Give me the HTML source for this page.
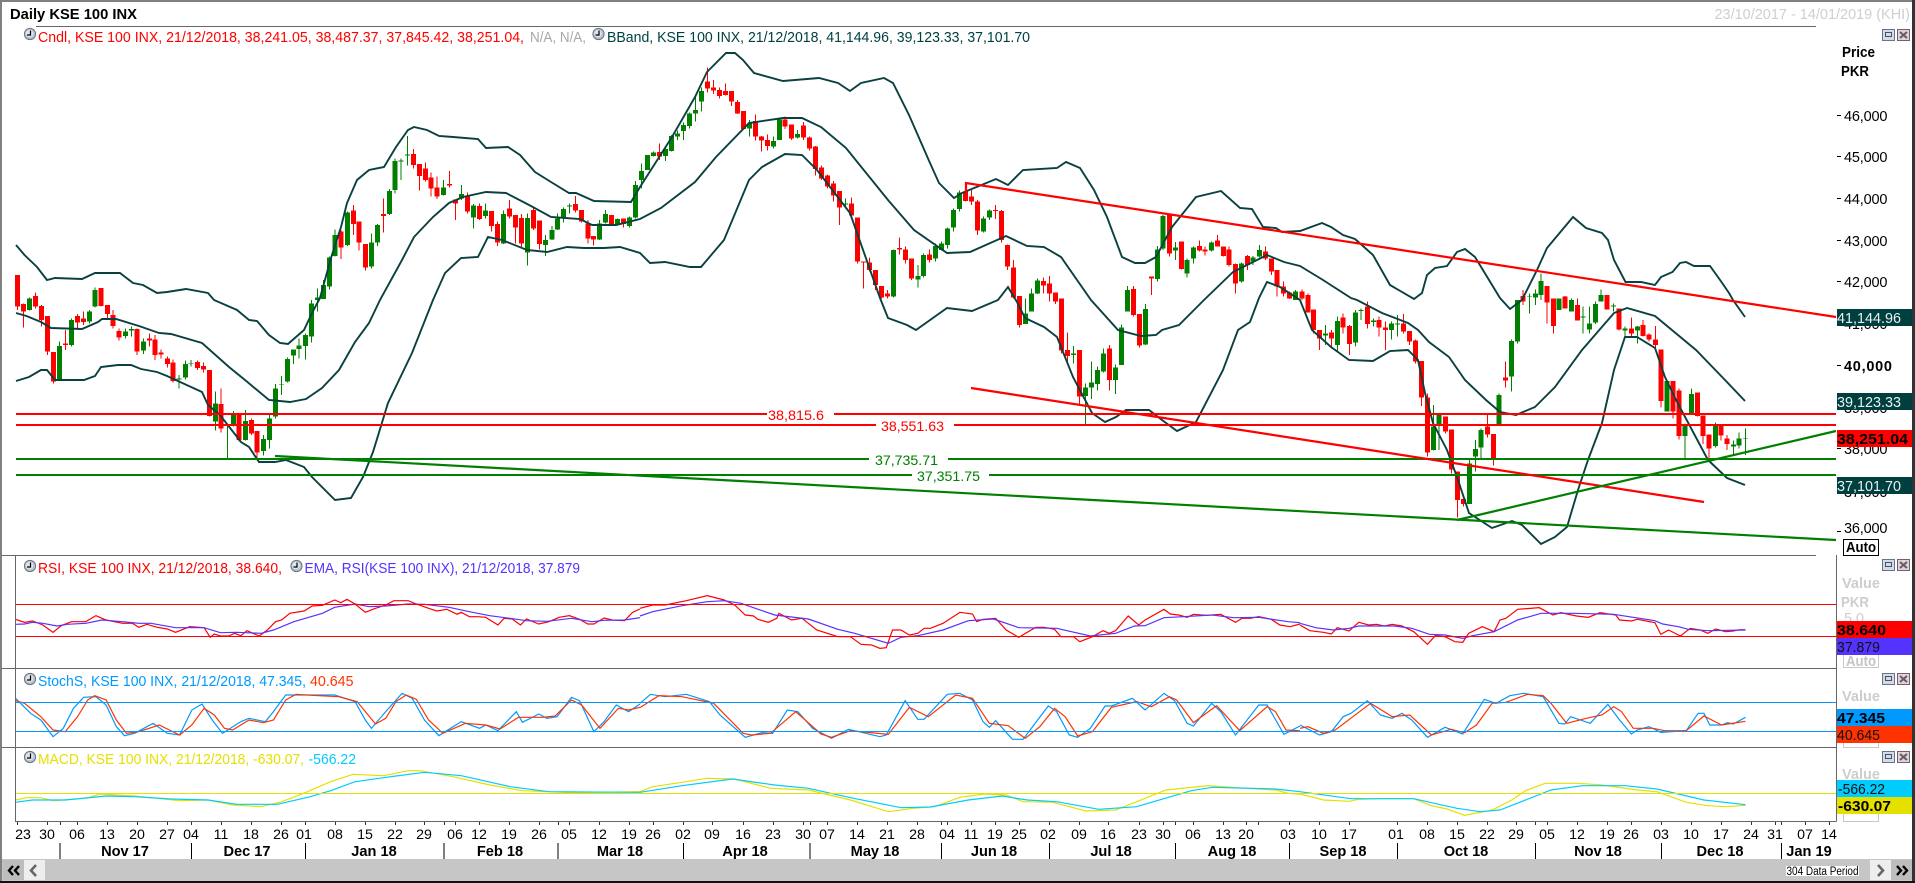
<!DOCTYPE html>
<html><head><meta charset="utf-8"><title>Daily KSE 100 INX</title>
<style>
html,body{margin:0;padding:0;background:#fff;overflow:hidden}
svg{display:block;font-family:"Liberation Sans",Arial,sans-serif;font-size:14px}
path,polyline{vector-effect:non-scaling-stroke;fill:none}
.gb{stroke:#007f00;stroke-width:5;shape-rendering:crispEdges}
.gw{stroke:#007f00;stroke-width:1;shape-rendering:crispEdges}
.rb{stroke:#f00;stroke-width:5;shape-rendering:crispEdges}
.rw{stroke:#f00;stroke-width:1;shape-rendering:crispEdges}
.band{fill:none;stroke:#0a4040;stroke-width:1.9}
.t{fill:none;stroke-width:1.2}
.d{text-anchor:middle}
.m{text-anchor:middle;font-weight:bold;font-size:14.6px}
</style></head><body>
<svg width="1915" height="883" viewBox="0 0 1915 883" xmlns="http://www.w3.org/2000/svg">
<rect width="1915" height="883" fill="#fff"/>

<!-- candles left -->
<g transform="scale(.40816,.33333)">
<path class="rw" d="M43 825V930M57 910V982M87 877V925M102 915V980M116 948V1065M131 1056V1150M160 990V1050M190 942V985M204 935V975M248 864V920M263 915V955M277 930V985M292 985V1022M336 985V1065M366 1000V1040M380 1005V1080M395 1048V1075M410 1070V1102M424 1078V1148M484 1082V1110M498 1087V1118M513 1110V1250M542 1165V1298M586 1240V1325M616 1255V1305M630 1293V1372M836 690V777M866 615V705M880 665V752M895 732V812M939 595V698M1013 447V505M1028 492V572M1042 487V545M1056 517V590M1071 530V597M1101 513V563M1116 598V660M1145 577V640M1175 610V660M1204 633V695M1219 665V738M1248 600V655M1263 645V730M1278 642V745M1307 622V690M1322 662V748M1410 588V637M1425 630V668M1440 660V730M1454 708V737M1498 645V672M1528 655V683"/>
<path class="rb" d="M43 825V920M57 912V935M87 888V920M102 918V960M116 948V1055M131 1056V1145M160 1030V1035M190 948V968M204 955V966M248 864V918M263 915V942M277 945V978M292 993V1013M336 987V1055M366 1015V1022M380 1018V1065M395 1058V1063M410 1075V1092M424 1087V1143M484 1086V1104M498 1098V1108M513 1110V1248M542 1212V1285M586 1240V1320M616 1260V1300M630 1293V1358M836 695V743M866 632V672M880 665V728M895 732V803M939 642V648M1013 462V495M1028 492V528M1042 505V540M1056 532V565M1071 562V590M1101 552V557M1116 598V610M1145 586V635M1175 618V657M1204 633V678M1219 672V728M1248 625V650M1263 645V683M1278 654V730M1307 630V685M1322 662V732M1410 612V632M1425 630V665M1440 670V715M1454 708V718M1498 645V672M1528 655V672"/>
<path class="gw" d="M72 893V932M146 1025V1045M175 955V1040M219 930V970M233 862V922M307 985V1015M322 980V1010M351 1015V1062M439 1125V1165M454 1082V1138M468 1080V1100M528 1175V1292M557 1275V1375M572 1233V1280M601 1230V1322M645 1305V1367M660 1245V1345M675 1152V1255M690 1128V1185M704 1073V1148M719 1048V1092M733 1015V1075M748 1000V1078M763 900V1028M778 865V935M792 840V897M807 770V868M821 688V770M851 635V738M910 700V805M925 672V738M954 567V645M968 475V580M983 475V540M998 408V497M1086 540V587M1131 555V600M1160 612V686M1190 610V655M1234 632V732M1292 640V797M1337 705V768M1352 678V720M1366 640V690M1381 622V667M1395 610V640M1469 660V720M1484 630V670M1513 655V675M1542 650V683M1557 543V655"/>
<path class="gb" d="M72 895V930M146 1038V1138M175 960V1035M219 935V965M233 870V920M307 995V1008M322 987V991M351 1025V1052M439 1135V1138M454 1092V1133M468 1089V1091M528 1210V1265M557 1275V1278M572 1245V1278M601 1263V1320M645 1317V1353M660 1255V1320M675 1165V1250M690 1152V1154M704 1077V1145M719 1048V1067M733 1036V1047M748 1005V1038M763 910V1010M778 893V900M792 855V897M807 773V860M821 705V768M851 638V735M910 727V800M925 675V728M954 573V642M968 483V570M983 481V485M998 463V467M1086 562V585M1131 582V595M1160 617V653M1190 632V648M1234 642V730M1292 654V758M1337 720V735M1352 690V718M1366 655V688M1381 627V652M1395 617V620M1469 670V718M1484 642V668M1513 657V672M1542 653V678M1557 555V653"/>
</g>
<!-- candles middle -->
<g transform="translate(640,0) scale(.42088,.33333)">
<path class="rw" d="M46 430V480M160 203V278M175 240V282M189 262V295M203 250V287M217 273V318M232 300V342M246 333V388M274 343V422M289 408V455M303 403V452M345 350V387M360 373V420M388 366V420M403 410V452M417 438V527M431 497V540M445 523V565M460 543V605M474 573V675M502 592V650M517 652V790M531 785V865M545 772V815M560 810V870M574 858V895M588 870V895M617 712V763M631 740V790M645 775V840M688 748V788M773 548V605M788 565V615M802 600V705M845 615V657M859 630V728M873 733V810M887 780V895M902 888V983M959 832V880M973 828V905M987 877V912M1001 895V1060M1016 998V1085M1044 1050V1215M1115 1035V1172M1172 858V950M1187 942V1043M1215 830V885M1258 645V770M1286 725V808M1329 722V755M1343 740V767M1372 705V740M1386 740V770M1400 740V800M1415 790V880M1443 765V810M1486 740V780M1500 775V825M1514 810V890M1529 845V890M1543 875V897"/>
<path class="rb" d="M46 456V470M160 245V265M175 262V272M189 270V288M203 273V285M217 273V305M232 306V340M246 333V387M274 363V410M289 410V422M303 420V438M345 358V380M360 373V415M388 376V413M403 412V445M417 440V507M431 502V535M445 526V560M460 550V587M474 573V622M502 610V647M517 652V785M531 785V787M545 787V810M560 810V855M574 858V892M588 880V890M617 744V748M631 748V780M645 775V835M688 763V780M773 575V603M788 590V605M802 605V692M845 630V633M859 633V720M873 735V800M887 802V892M902 888V975M959 843V857M973 850V880M987 877V905M1001 895V1052M1016 1050V1068M1044 1050V1190M1115 1045V1140M1172 867V945M1187 942V1037M1215 830V835M1258 645V760M1286 725V807M1329 738V752M1343 748V755M1372 722V740M1386 740V768M1400 748V795M1415 792V850M1443 768V795M1486 755V775M1500 775V815M1514 810V860M1529 860V880M1543 877V895"/>
<path class="gw" d="M4 490V565M18 465V510M32 455V470M60 440V483M75 405V455M89 392V420M103 368V420M118 338V385M132 285V365M146 262V335M260 360V410M317 410V445M331 352V420M374 390V415M488 595V625M602 748V892M660 795V862M674 760V832M702 730V785M716 725V752M731 682V745M745 625V695M759 572V635M816 650V697M830 628V660M916 895V972M930 865V935M945 835V882M1030 1038V1090M1059 1150V1272M1073 1085V1197M1087 1100V1172M1101 1045V1117M1130 1093V1182M1144 973V1095M1158 858V935M1201 912V1035M1229 738V845M1243 645V750M1272 726V780M1300 775V832M1315 740V790M1358 725V755M1429 788V848M1457 768V795M1472 735V773M1557 870V900"/>
<path class="gb" d="M4 513V540M18 465V510M32 458V468M60 447V468M75 408V453M89 400V410M103 375V393M118 340V378M132 330V340M146 273V305M260 370V385M317 423V440M331 358V420M374 402V413M488 610V613M602 750V890M660 828V838M674 765V828M702 738V775M716 730V750M731 685V735M745 630V683M759 577V627M816 655V695M830 632V653M916 940V972M930 880V935M945 842V880M1030 1060V1065M1059 1162V1188M1073 1147V1163M1087 1110V1152M1101 1060V1115M1130 1102V1140M1144 982V1095M1158 870V935M1201 927V1033M1229 748V837M1243 648V745M1272 743V752M1300 780V820M1315 743V775M1358 728V752M1429 790V845M1457 772V785M1472 750V770M1557 875V900"/>
</g>
<!-- candles right -->
<g transform="translate(1300,0) scale(.39216,.33333)">
<path class="rw" d="M5 868V900M20 880V938M35 928V1000M50 990V1050M80 990V1045M110 940V1000M126 975V1065M172 905V985M202 950V1010M218 965V1050M264 942V1000M279 993V1035M294 1018V1090M310 1083V1218M325 1180V1370M371 1250V1300M386 1288V1420M401 1415V1552M417 1495V1520M478 1240V1313M493 1302V1397M524 1085V1162M569 870V915M630 858V970M646 895V1000M676 888V925M707 895V962M783 885V928M814 925V992M845 952V1010M875 960V1010M890 1000V1025M906 978V1048M921 1048V1222M951 1143V1255M967 1165V1318M1013 1177V1250M1028 1247V1332M1043 1303V1375M1074 1275V1322M1089 1305V1350"/>
<path class="rb" d="M5 875V895M20 885V938M35 928V990M50 990V1015M80 997V1015M110 952V982M126 978V1032M172 920V972M202 960V983M218 982V990M264 970V995M279 993V1025M294 1022V1085M310 1083V1193M325 1193V1358M371 1250V1295M386 1288V1408M401 1415V1500M417 1497V1512M478 1280V1303M493 1302V1375M524 1132V1142M569 888V905M630 858V908M646 895V978M676 890V925M707 915V962M783 885V928M814 925V988M845 985V1000M875 975V1008M890 1003V1018M906 1018V1035M921 1048V1203M951 1143V1235M967 1172V1308M1013 1177V1248M1028 1247V1308M1043 1303V1345M1074 1275V1307M1089 1315V1332"/>
<path class="gw" d="M65 975V1035M95 950V1055M141 930V1040M156 925V960M187 955V980M233 965V1018M248 945V1010M340 1215V1352M355 1240V1350M432 1380V1512M447 1320V1415M462 1285V1375M508 1180V1272M539 1018V1175M554 900V1030M585 880V940M600 868V915M615 820V900M661 895V930M692 895V935M722 920V1000M738 920V1000M753 905V972M768 868V905M799 910V935M829 980V1010M860 978V1030M936 1140V1235M982 1270V1375M998 1165V1242M1059 1268V1342M1105 1322V1362M1120 1297V1345M1136 1285V1365"/>
<path class="gb" d="M65 1000V1007M95 963V1035M141 938V1028M156 930V933M187 962V966M233 970V990M248 970V973M340 1280V1350M355 1245V1275M432 1390V1512M447 1347V1370M462 1290V1343M508 1185V1272M539 1023V1130M554 900V1025M585 889V891M600 880V893M615 843V885M661 895V930M692 900V935M722 950V953M738 970V988M753 912V968M768 885V905M799 917V920M829 985V992M860 980V992M936 1143V1235M982 1278V1308M998 1182V1240M1059 1272V1338M1105 1334V1340M1120 1315V1337M1136 1314V1316"/>
</g>

<!-- Bollinger bands -->
<polyline class="band" points="16,245 24.5,255 37,267 47,280 55,278 82,279 95,273 120,273 133,283 143,285 157,293 167,292 186,289 208,293 214,300 237,310 249,320 257,321 269,335 280,343 288,344 304,330 312,313 320,298 331,258 341,227 347,203 357,180 369,170 384,167 396,147 408,130 414,127 427,130 439,136 453,137 478,139 486,148 508,147 520,155 535,172 551,182 569,193 576,193 594,201 631,202 640,187 672,137 695,97 707,72 726,53 735,53 743,60 754,73 783,81 819,78 838,83 850,91 861,83 884,78 893,83 909,115 930,163 939,183 954,198 962,193 996,179 1008,185 1023,170 1057,168 1066,162 1080,168 1094,190 1107,217 1122,257 1135,263 1145,263 1156,257 1172,227 1196,197 1221,191 1240,208 1252,209 1263,227 1276,228 1282,232 1300,231 1322,223 1331,227 1343,235 1355,239 1373,255 1390,285 1414,299 1422,293 1427,275 1435,268 1447,266 1457,252 1465,249 1475,257 1500,298 1510,309 1522,300 1537,270 1547,248 1573,217 1586,228 1602,233 1608,240 1614,260 1625.5,282 1641,282 1655,285 1661,277 1672.5,272 1680,263 1686,262 1694,266 1710,266 1721.5,282 1729,293 1733,300 1745,317"/>
<polyline class="band" points="16,313 26.5,316 41,322 51,328 82,329 98,322 102,319 116,319 139,326 159,333 171,334 202,343 229,367 245,380 269,400 290,402 306,399 322,388 339,370 355,342 369,323 380,300 402,260 414,237 433,217 449,203 463,197 486,192 506,193 531,206 551,217 580,219 592,225 616,225 640,219 661,208 695,182 716,157 749,123 783,118 802,118 821,127 846,148 888,200 914,230 947,253 970,252 1006,236 1027,246 1044,247 1061,257 1091,300 1118,330 1141,336 1156,335 1162,330 1179,325 1204,300 1233,272 1267,255 1284,262 1300,266 1323,280 1351,298 1357,300 1382,313 1408,323 1418,330 1429,342 1449,357 1465,380 1486,400 1500,412 1516,415 1535,407 1555,387 1582,350 1614,313 1627,308 1655,316 1696,350 1725,380 1745,401"/>
<polyline class="band" points="16,381 29,377 41,370 47,370 55,380 84,380 95,376 101,367 118,365 131,365 141,369 157,372 167,376 202,392 208,405 220,415 241,442 249,447 259,462 275,462 286,460 304,467 312,477 335,500 351,498 363,477 373,452 388,403 412,353 433,300 445,273 461,258 478,257 488,237 502,240 527,250 547,252 567,247 584,248 604,248 620,247 640,253 650,263 665,262 690,267 701,267 724,240 749,180 762,167 785,154 802,155 817,170 850,213 880,298 888,318 907,325 916,330 947,308 972,311 998,300 1008,287 1017,302 1025,318 1044,327 1057,337 1073,377 1092,413 1105,422 1116,417 1126,410 1149,410 1162,420 1177,431 1196,422 1223,370 1238,330 1250,322 1259,298 1267,282 1280,287 1300,300 1312,330 1331,347 1349,360 1373,361 1390,351 1408,350 1418,360 1425,393 1433,423 1447,450 1457,477 1469,513 1492,528 1512,521 1522,525 1541,544 1555,537 1567,527 1578,490 1588,460 1602,423 1614,370 1625,337 1637,337 1655,348 1665,377 1676,400 1692,430 1708,460 1727,478 1745,485"/>

<!-- horizontal levels -->
<g fill="none" shape-rendering="crispEdges" stroke-width="2">
<path stroke="#f00" d="M16 414H767M834 414H1836M16 425H876M954 425H1836"/>
<path stroke="#007f00" d="M16 459H869M948 459H1836M16 475H912M989 475H1836"/>
</g>
<g fill="#f00"><text x="768" y="420" textLength="56" lengthAdjust="spacingAndGlyphs" dx="0">38,815.6</text>
<text x="881" y="431" textLength="63" lengthAdjust="spacingAndGlyphs">38,551.63</text></g>
<g fill="#007f00"><text x="875" y="465" textLength="63" lengthAdjust="spacingAndGlyphs">37,735.71</text>
<text x="917" y="481" textLength="63" lengthAdjust="spacingAndGlyphs">37,351.75</text></g>
<!-- trend lines -->
<g fill="none" stroke-width="2.2">
<path stroke="#f00" d="M966 192V183L1836 317M971 388L1704 502"/>
<path stroke="#007f00" d="M275 456L1836 540M1457 520L1836 431"/>
</g>

<!-- indicator lines -->
<g transform="translate(0,580) scale(.40816,.33333)">
<polyline class="t" stroke="#f00" points="38,118 60,127 80,123 105,135 130,157 150,137 175,125 210,125 235,107 260,120 300,130 325,130 340,142 360,133 385,142 410,147 430,157 465,140 500,143 515,172 525,162 540,168 560,168 575,160 590,167 605,152 635,168 655,150 675,125 690,120 710,100 745,93 765,78 790,76 820,60 835,68 850,58 870,72 895,97 920,85 945,75 965,62 1000,62 1020,72 1050,85 1070,93 1095,88 1120,103 1130,97 1150,110 1170,110 1190,112 1220,135 1235,115 1255,117 1275,135 1290,117 1320,132 1345,125 1370,112 1395,107 1420,118 1440,132 1455,132 1480,114 1500,120 1530,122 1550,97 1568,87"/>
<polyline class="t" stroke="#5533ff" points="38,133 60,132 80,127 105,130 140,138 165,133 210,130 250,120 300,125 340,130 370,130 430,143 500,143 540,158 580,157 640,160 670,150 720,125 790,100 820,82 870,72 905,80 945,78 1000,72 1040,73 1100,82 1150,95 1200,107 1250,115 1290,122 1340,124 1400,115 1450,125 1480,121 1530,120 1568,113"/>
<polyline class="t" stroke="#0099ff" points="38,355 75,400 100,420 130,470 155,445 180,385 205,352 235,350 260,375 285,440 305,467 330,460 375,430 410,460 440,465 470,390 495,372 520,420 545,460 590,425 610,415 650,425 670,395 700,345 760,345 820,345 870,365 895,420 910,445 945,395 985,340 1010,355 1040,420 1075,467 1130,425 1175,445 1190,435 1220,452 1265,395 1280,427 1320,402 1340,415 1365,410 1400,352 1420,362 1455,455 1480,425 1510,375 1540,395 1568,372"/>
<polyline class="t" stroke="#ff3300" points="38,362 60,370 100,410 130,450 160,455 190,410 215,360 232,347 260,360 285,420 310,460 340,455 390,435 440,465 470,435 500,385 525,405 550,445 570,450 610,420 645,428 670,420 700,360 725,343 780,347 830,350 875,365 920,432 945,415 970,365 995,345 1020,358 1050,420 1085,460 1140,430 1190,435 1225,447 1270,412 1330,412 1360,408 1400,360 1425,375 1470,445 1515,385 1540,390 1568,382"/>
<polyline class="t" stroke="#e6e000" points="38,660 65,653 100,653 130,662 210,655 245,642 330,648 440,662 510,660 570,675 640,680 690,665 750,637 810,605 865,583 940,587 1000,572 1030,572 1110,590 1200,615 1280,632 1400,638 1568,635"/>
<polyline class="t" stroke="#00ccff" points="38,667 80,660 160,660 260,648 330,650 420,657 510,660 580,673 680,673 760,650 810,632 870,605 970,588 1040,577 1130,587 1250,620 1345,635 1568,637"/>
</g>
<g transform="translate(640,580) scale(.42088,.33333)">
<polyline class="t" stroke="#f00" points="0,85 30,75 60,75 110,62 160,47 200,60 225,75 250,105 270,108 280,118 305,127 325,115 330,100 360,120 385,115 420,150 470,170 500,170 525,193 550,195 570,205 585,203 600,150 620,150 640,165 660,160 675,145 690,145 720,130 760,97 790,102 800,125 815,118 845,115 870,150 900,172 940,142 960,142 985,148 1000,170 1030,170 1045,185 1075,170 1100,152 1115,160 1130,152 1160,108 1185,135 1200,120 1245,88 1260,102 1280,105 1300,112 1315,103 1345,106 1380,103 1415,127 1430,115 1450,115 1470,110 1500,118 1520,135 1545,140 1568,132"/>
<polyline class="t" stroke="#5533ff" points="0,108 30,95 100,77 160,65 200,62 240,70 320,105 400,117 470,148 510,160 590,190 620,172 660,167 720,150 780,122 840,117 900,143 990,145 1070,168 1130,160 1175,138 1200,137 1245,113 1290,110 1360,105 1410,113 1470,112 1540,125 1568,128"/>
<polyline class="t" stroke="#0099ff" points="0,370 25,343 60,350 110,343 165,365 190,405 250,472 290,458 315,460 350,390 375,395 410,445 455,475 495,448 530,458 570,470 585,465 630,362 660,418 675,418 730,343 760,340 790,360 815,425 830,442 845,422 885,478 910,478 970,378 990,395 1020,465 1040,472 1070,445 1105,378 1120,378 1170,355 1200,390 1245,340 1270,362 1300,430 1315,438 1358,370 1380,395 1415,465 1470,375 1490,375 1530,463 1568,438"/>
<polyline class="t" stroke="#ff3300" points="0,383 45,347 100,350 175,370 245,460 265,465 310,460 370,395 430,462 455,472 500,452 590,463 640,382 685,410 750,345 790,355 830,430 875,437 915,475 950,440 985,385 1010,410 1040,468 1075,455 1120,382 1180,365 1215,380 1258,350 1275,360 1315,428 1370,377 1425,452 1490,380 1510,395 1535,450 1568,452"/>
<polyline class="t" stroke="#e6e000" points="0,635 30,620 100,607 160,595 225,597 310,625 400,630 500,660 590,695 650,685 700,680 760,652 820,642 870,645 910,665 980,667 1060,693 1130,690 1180,665 1250,630 1350,617 1440,625 1510,630 1540,640 1568,643"/>
<polyline class="t" stroke="#00ccff" points="0,637 100,617 220,597 320,615 400,625 500,653 620,683 690,681 780,660 860,648 920,660 990,665 1090,688 1180,680 1310,632 1360,622 1510,627 1568,635"/>
</g>
<g transform="translate(1300,580) scale(.39216,.33333)">
<polyline class="t" stroke="#f00" points="0,135 25,152 60,157 80,162 95,143 125,153 150,127 175,135 195,133 215,138 235,133 260,138 290,155 325,193 345,167 370,170 395,185 415,187 430,160 465,140 495,155 510,120 525,115 555,88 610,83 645,105 665,98 705,108 735,112 765,98 805,105 815,120 845,123 860,118 905,128 920,163 940,150 970,168 995,145 1020,150 1040,160 1060,147 1085,155 1105,153 1120,149 1136,149"/>
<polyline class="t" stroke="#5533ff" points="0,130 40,143 85,150 125,145 150,138 240,138 285,145 330,163 370,165 415,175 440,167 495,155 555,120 615,100 695,100 800,103 905,122 925,132 965,140 990,148 1040,152 1136,150"/>
<polyline class="t" stroke="#0099ff" points="0,435 50,465 80,455 110,410 130,400 172,362 205,405 235,415 260,400 285,420 325,472 370,442 415,462 470,358 500,370 535,347 570,340 620,350 660,430 675,432 690,410 740,430 785,373 815,420 845,462 860,450 890,440 920,457 985,452 1015,400 1030,400 1045,435 1075,435 1090,428 1105,432 1136,412"/>
<polyline class="t" stroke="#ff3300" points="0,445 20,440 60,460 90,450 180,370 235,410 280,405 335,465 385,448 420,458 450,435 490,370 525,367 580,343 620,347 640,370 680,430 730,415 770,405 800,380 820,395 850,445 900,445 930,452 985,452 1030,408 1075,435 1136,424"/>
<polyline class="t" stroke="#e6e000" points="0,642 60,660 125,664 150,658 210,656 290,656 335,677 375,687 420,706 490,690 540,660 575,632 625,610 710,610 770,615 860,630 910,635 985,667 1040,677 1085,680 1136,676"/>
<polyline class="t" stroke="#00ccff" points="0,635 130,656 290,656 400,685 460,695 510,690 640,630 720,617 830,617 910,627 1030,660 1136,674"/>
</g>
<g fill="none" stroke-width="1.2" shape-rendering="crispEdges">
<path stroke="#f00" d="M16 604.5H1836M16 636.5H1836"/>
<path stroke="#0099ff" d="M16 702.5H1836M16 731.5H1836"/>
<path stroke="#e6e000" d="M16 793.5H1836"/>
</g>

<!-- frame rules -->
<g fill="none" stroke="#666" stroke-width="1" shape-rendering="crispEdges">
<path d="M36 26.5H1816M2 555.5H1816M2 668.5H1836.5M2 747.5H1836.5M15.5 555V821.5M1836.5 555V821.5M15 821.5H1836.5"/>
</g>
<rect x="0" y="0" width="1915" height="2" fill="#808080"/>
<rect x="0" y="0" width="2" height="883" fill="#808080"/>
<rect x="1912" y="0" width="3" height="883" fill="#333"/>

<!-- title -->
<text x="10" y="19" font-weight="bold" font-size="14.5" textLength="127" lengthAdjust="spacingAndGlyphs">Daily KSE 100 INX</text>
<text x="1714.5" y="19" fill="#cfcfcf" font-size="14.5" textLength="195.5" lengthAdjust="spacingAndGlyphs">23/10/2017 - 14/01/2019 (KHI)</text>

<!-- legends -->
<defs>
<g id="clk"><circle cx="6" cy="6" r="5.6" fill="#b9c3d2" stroke="#6b7480" stroke-width="1"/><circle cx="5.5" cy="5.5" r="3.8" fill="#dfe4ea"/><path d="M6.5 2.5V7H3" stroke="#000" stroke-width="1.2" fill="none"/></g>
<g id="mn"><rect x=".5" y=".5" width="12" height="11" fill="#d5dbe5" stroke="#66758f"/><rect x="3.5" y="3.5" width="6" height="4" fill="none" stroke="#45506a" stroke-width="1"/></g>
<g id="cl"><rect x=".5" y=".5" width="12" height="11" fill="#dcd5da" stroke="#805a6a"/><path d="M3 3L10 9M10 3L3 9" stroke="#6b5a66" stroke-width="2" fill="none"/></g>
</defs>
<use href="#clk" x="24" y="28"/><use href="#clk" x="592.5" y="28"/>
<text x="38" y="42" fill="#f00" font-size="14.5" textLength="486" lengthAdjust="spacingAndGlyphs">Cndl, KSE 100 INX, 21/12/2018, 38,241.05, 38,487.37, 37,845.42, 38,251.04,</text>
<text x="530" y="42" fill="#a8a8a8" font-size="14.5" textLength="56" lengthAdjust="spacingAndGlyphs">N/A, N/A,</text>
<text x="607" y="42" fill="#004040" font-size="14.5" textLength="423" lengthAdjust="spacingAndGlyphs">BBand, KSE 100 INX, 21/12/2018, 41,144.96, 39,123.33, 37,101.70</text>

<use href="#clk" x="24" y="560"/><use href="#clk" x="290.5" y="560"/>
<text x="38" y="573" fill="#f00" font-size="14.5" textLength="244" lengthAdjust="spacingAndGlyphs">RSI, KSE 100 INX, 21/12/2018, 38.640,</text>
<text x="304.5" y="573" fill="#5533ff" font-size="14.5" textLength="275.5" lengthAdjust="spacingAndGlyphs">EMA, RSI(KSE 100 INX), 21/12/2018, 37.879</text>

<use href="#clk" x="24" y="673"/>
<text x="38" y="686" fill="#0099ff" font-size="14.5" textLength="268" lengthAdjust="spacingAndGlyphs">StochS, KSE 100 INX, 21/12/2018, 47.345,</text>
<text x="310" y="686" fill="#ff3300" font-size="14.5" textLength="43.5" lengthAdjust="spacingAndGlyphs">40.645</text>

<use href="#clk" x="24" y="751"/>
<text x="38" y="764" fill="#e6e000" font-size="14.5" textLength="266" lengthAdjust="spacingAndGlyphs">MACD, KSE 100 INX, 21/12/2018, -630.07,</text>
<text x="308.5" y="764" fill="#00ccff" font-size="14.5" textLength="47.5" lengthAdjust="spacingAndGlyphs">-566.22</text>

<!-- right axis -->
<use href="#mn" x="1882" y="29"/><use href="#cl" x="1897" y="29"/>
<use href="#mn" x="1882" y="559"/><use href="#cl" x="1897" y="559"/>
<use href="#mn" x="1882" y="673"/><use href="#cl" x="1897" y="673"/>
<use href="#mn" x="1882" y="751"/><use href="#cl" x="1897" y="751"/>

<text x="1842" y="57" font-weight="bold" font-size="14.5" textLength="33" lengthAdjust="spacingAndGlyphs">Price</text>
<text x="1841" y="76" font-weight="bold" font-size="14.5" textLength="28" lengthAdjust="spacingAndGlyphs">PKR</text>
<g font-size="14.5">
<text x="1844" y="121" textLength="43.5">46,000</text>
<text x="1844" y="162" textLength="43.5">45,000</text>
<text x="1844" y="204" textLength="43.5">44,000</text>
<text x="1844" y="246" textLength="43.5">43,000</text>
<text x="1844" y="287" textLength="43.5">42,000</text>
<text x="1844" y="329" textLength="43.5">41,000</text>
<text x="1844" y="371" textLength="48" font-weight="bold">40,000</text>
<text x="1844" y="413" textLength="43.5">39,000</text>
<text x="1844" y="454" textLength="43.5">38,000</text>
<text x="1844" y="497" textLength="43.5">37,000</text>
<text x="1844" y="533" textLength="43.5">36,000</text>
</g>
<path stroke="#000" stroke-width="1" fill="none" shape-rendering="crispEdges" d="M1837 115.5H1841M1837 156.5H1841M1837 198.5H1841M1837 240.5H1841M1837 281.5H1841M1837 365.5H1841M1837 448.5H1841M1837 531.5H1841"/>
<rect x="1843.5" y="539.5" width="35" height="16" fill="#fff" stroke="#000"/>
<text x="1846" y="552" font-weight="bold" font-size="14.5" textLength="30" lengthAdjust="spacingAndGlyphs">Auto</text>

<g font-size="14.5">
<rect x="1837" y="309" width="75" height="17" fill="#003f3f"/><text x="1837" y="323" fill="#e8f0f0" textLength="64" lengthAdjust="spacingAndGlyphs">41,144.96</text>
<rect x="1837" y="393" width="75" height="17" fill="#003f3f"/><text x="1837" y="407" fill="#e8f0f0" textLength="64" lengthAdjust="spacingAndGlyphs">39,123.33</text>
<rect x="1837" y="430" width="75" height="17" fill="#f00"/><text x="1837" y="444" font-weight="bold" textLength="71" lengthAdjust="spacingAndGlyphs">38,251.04</text>
<rect x="1837" y="477" width="75" height="17" fill="#003f3f"/><text x="1837" y="491" fill="#e8f0f0" textLength="64" lengthAdjust="spacingAndGlyphs">37,101.70</text>
</g>

<!-- RSI pane right -->
<g fill="#cdcdcd" font-weight="bold" font-size="14.5">
<text x="1842" y="588" textLength="38" lengthAdjust="spacingAndGlyphs">Value</text>
<text x="1841" y="607" textLength="28" lengthAdjust="spacingAndGlyphs">PKR</text>
<text x="1844" y="623" font-weight="normal" textLength="20">50</text>
</g>
<rect x="1843.5" y="654.5" width="35" height="13" fill="#fff" stroke="#c8c8c8"/>
<text x="1846" y="666" fill="#c4c4c4" font-weight="bold" font-size="14.5" textLength="30" lengthAdjust="spacingAndGlyphs">Auto</text>
<g font-size="14.5">
<rect x="1837" y="621" width="75" height="17" fill="#f00"/><text x="1837" y="635" font-weight="bold" textLength="49" lengthAdjust="spacingAndGlyphs">38.640</text>
<rect x="1837" y="638" width="75" height="17" fill="#5533ff"/><text x="1837" y="652" fill="#111" textLength="43" lengthAdjust="spacingAndGlyphs">37.879</text>
</g>
<!-- Stoch pane right -->
<text x="1842" y="701" fill="#cdcdcd" font-weight="bold" font-size="14.5" textLength="38" lengthAdjust="spacingAndGlyphs">Value</text>
<rect x="1843.5" y="741.5" width="35" height="6" fill="#fff" stroke="#c8c8c8"/>
<g font-size="14.5">
<rect x="1837" y="709" width="75" height="17" fill="#0099ff"/><text x="1837" y="723" font-weight="bold" textLength="48" lengthAdjust="spacingAndGlyphs">47.345</text>
<rect x="1837" y="726" width="75" height="17" fill="#ff3300"/><text x="1837" y="740" fill="#111" textLength="43" lengthAdjust="spacingAndGlyphs">40.645</text>
</g>
<!-- MACD pane right -->
<text x="1842" y="779" fill="#cdcdcd" font-weight="bold" font-size="14.5" textLength="38" lengthAdjust="spacingAndGlyphs">Value</text>
<rect x="1843.5" y="812.5" width="35" height="9" fill="#fff" stroke="#c8c8c8"/>
<g font-size="14.5">
<rect x="1837" y="780" width="75" height="17" fill="#00ccff"/><text x="1838" y="794" fill="#111" textLength="47" lengthAdjust="spacingAndGlyphs">-566.22</text>
<rect x="1837" y="797" width="75" height="17" fill="#e6e000"/><text x="1838" y="811" font-weight="bold" textLength="53" lengthAdjust="spacingAndGlyphs">-630.07</text>
</g>

<!-- time axis -->
<path stroke="#333" stroke-width="1" fill="none" shape-rendering="crispEdges" d="M17.5 822V825M47.5 822V825M60.5 822V825M77.5 822V825M107.5 822V825M137.5 822V825M167.5 822V825M191.5 822V825M221.5 822V825M251.5 822V825M281.5 822V825M305.5 822V825M335.5 822V825M365.5 822V825M395.5 822V825M424.5 822V825M444.5 822V825M455.5 822V825M479.5 822V825M509.5 822V825M539.5 822V825M558.5 822V825M569.5 822V825M599.5 822V825M629.5 822V825M653.5 822V825M683.5 822V825M712.5 822V825M743.5 822V825M773.5 822V825M803.5 822V825M810.5 822V825M827.5 822V825M857.5 822V825M887.5 822V825M917.5 822V825M941.5 822V825M947.5 822V825M971.5 822V825M995.5 822V825M1019.5 822V825M1049.5 822V825M1079.5 822V825M1108.5 822V825M1139.5 822V825M1163.5 822V825M1175.5 822V825M1193.5 822V825M1223.5 822V825M1246.5 822V825M1258.5 822V825M1289.5 822V825M1319.5 822V825M1349.5 822V825M1397.5 822V825M1427.5 822V825M1457.5 822V825M1487.5 822V825M1516.5 822V825M1535.5 822V825M1547.5 822V825M1577.5 822V825M1607.5 822V825M1631.5 822V825M1661.5 822V825M1691.5 822V825M1721.5 822V825M1751.5 822V825M1775.5 822V825M1781.5 822V825M1805.5 822V825M1829.5 822V825"/>
<g class="d" font-size="14.2" text-anchor="middle">
<text x="23" y="839">23</text><text x="47" y="839">30</text><text x="77" y="839">06</text><text x="107" y="839">13</text><text x="137" y="839">20</text><text x="167" y="839">27</text><text x="191" y="839">04</text><text x="221" y="839">11</text><text x="251" y="839">18</text><text x="281" y="839">26</text><text x="304" y="839">01</text><text x="335" y="839">08</text><text x="365" y="839">15</text><text x="395" y="839">22</text><text x="424" y="839">29</text><text x="455" y="839">06</text><text x="479" y="839">12</text><text x="509" y="839">19</text><text x="539" y="839">26</text><text x="569" y="839">05</text><text x="599" y="839">12</text><text x="629" y="839">19</text>
<text x="653" y="839">26</text><text x="683" y="839">02</text><text x="712" y="839">09</text><text x="743" y="839">16</text><text x="773" y="839">23</text><text x="803" y="839">30</text><text x="827" y="839">07</text><text x="857" y="839">14</text><text x="887" y="839">21</text><text x="917" y="839">28</text><text x="947" y="839">04</text><text x="971" y="839">11</text><text x="995" y="839">19</text><text x="1019" y="839">25</text><text x="1048" y="839">02</text><text x="1079" y="839">09</text><text x="1108" y="839">16</text><text x="1139" y="839">23</text><text x="1163" y="839">30</text><text x="1193" y="839">06</text><text x="1223" y="839">13</text><text x="1246" y="839">20</text><text x="1288" y="839">03</text>
<text x="1319" y="839">10</text><text x="1349" y="839">17</text><text x="1396" y="839">01</text><text x="1427" y="839">08</text><text x="1457" y="839">15</text><text x="1487" y="839">22</text><text x="1516" y="839">29</text><text x="1547" y="839">05</text><text x="1577" y="839">12</text><text x="1607" y="839">19</text><text x="1631" y="839">26</text><text x="1661" y="839">03</text><text x="1691" y="839">10</text><text x="1721" y="839">17</text><text x="1751" y="839">24</text><text x="1775" y="839">31</text><text x="1805" y="839">07</text><text x="1829" y="839">14</text>
</g>
<g class="m">
<text x="125" y="856">Nov 17</text><text x="247" y="856">Dec 17</text><text x="374" y="856">Jan 18</text><text x="500" y="856">Feb 18</text><text x="620" y="856">Mar 18</text><text x="745" y="856">Apr 18</text><text x="875" y="856">May 18</text><text x="994" y="856">Jun 18</text><text x="1111" y="856">Jul 18</text><text x="1232" y="856">Aug 18</text><text x="1343" y="856">Sep 18</text><text x="1466" y="856">Oct 18</text><text x="1598" y="856">Nov 18</text><text x="1720" y="856">Dec 18</text><text x="1809" y="856">Jan 19</text>
</g>
<path stroke="#000" stroke-width="1" fill="none" shape-rendering="crispEdges" d="M60 843V859M191.500 843V859M305.500 843V859M444 843V859M558 843V859M683.500 843V859M810 843V859M941.500 843V859M1049.500 843V859M1175.500 843V859M1289.500 843V859M1397.500 843V859M1535.500 843V859M1661.500 843V859M1781.500 843V859"/>

<!-- scrollbar -->
<rect x="2" y="859" width="1910" height="22" fill="#c6c6c6"/>
<rect x="3" y="860" width="21" height="20" fill="#bdbdbd"/>
<rect x="24" y="860" width="21" height="20" fill="#eeeeee"/>
<rect x="1870" y="860" width="21" height="20" fill="#eeeeee"/>
<rect x="1891" y="860" width="21" height="20" fill="#bdbdbd"/>
<path fill="none" stroke="#000" stroke-width="2.4" d="M13 866L9 870.500L13 875M19 866L15 870.500L19 875M1897 866L1901 870.500L1897 875M1903 866L1907 870.500L1903 875"/>
<path fill="none" stroke="#666" stroke-width="2.6" d="M36 865L31 870.500L36 876M1878 865L1883 870.500L1878 876"/>
<rect x="1786" y="866" width="73" height="10" fill="#fff"/>
<text x="1786.500" y="875" font-size="11.5" textLength="72" lengthAdjust="spacingAndGlyphs">304 Data Period</text>
<rect x="0" y="881" width="1915" height="2" fill="#111"/>
</svg>
</body></html>
